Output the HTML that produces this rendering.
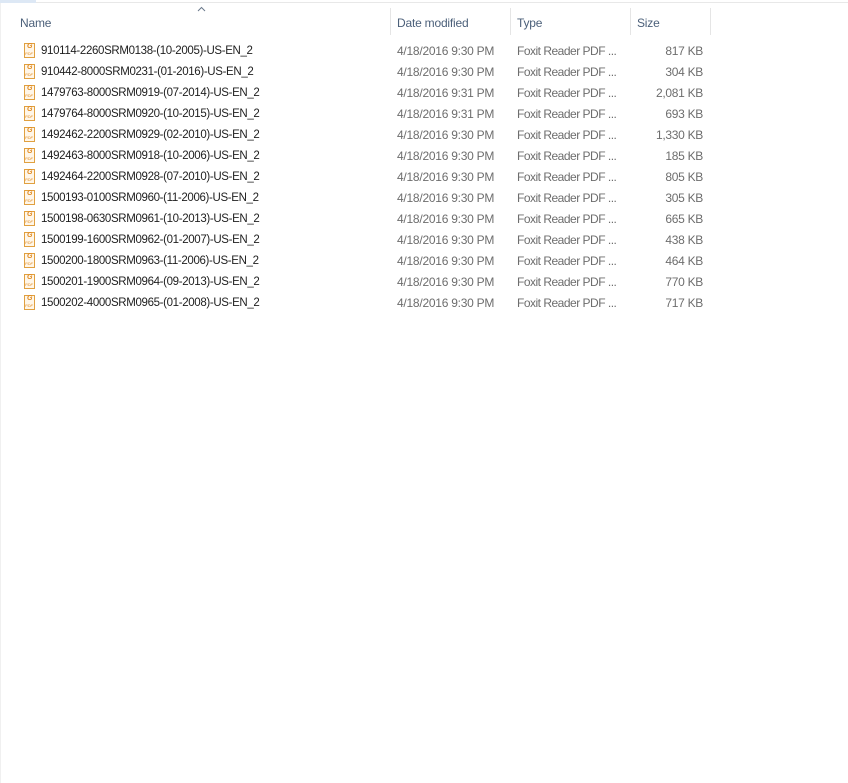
<!DOCTYPE html>
<html><head><meta charset="utf-8"><style>
*{margin:0;padding:0;box-sizing:border-box}
body{width:848px;height:783px;background:#fff;font-family:"Liberation Sans",sans-serif;font-size:12px;color:#1e1e1e;position:relative;overflow:hidden}
.top{position:absolute;left:0;top:0;width:848px;height:3px;border-bottom:1px solid #e8e8e8}
.tab{position:absolute;left:0;top:0;width:36px;height:3px;background:#dde8f5}
.lb{position:absolute;left:0;top:3px;width:1px;height:780px;background:#f0f0f0}
.hdr{position:absolute;color:#4c607a;font-size:12px;letter-spacing:-0.2px}
.sep{position:absolute;top:8px;width:1px;height:27px;background:#e5e5e5}
.caret{position:absolute;left:197px;top:5px;width:9px;height:9px}
.row{position:absolute;left:0;height:21px;width:848px}
.row span{position:absolute;top:4px;white-space:nowrap}
.row span.n{left:41px;top:5px;font-size:11.5px;letter-spacing:-0.35px}
.d{left:397px;color:#6d6d6d;letter-spacing:-0.25px}
.t{left:517px;color:#6d6d6d;letter-spacing:-0.5px}
.s{right:145px;color:#6d6d6d;letter-spacing:-0.3px}
.ic{position:absolute;left:24px;top:3px;width:11px;height:15px;border:1px solid #e0a040;background:#fff6e8}
.ic:before{content:"G";position:absolute;left:2px;top:-1px;font-size:7px;font-weight:bold;color:#e08a20}
.ic:after{content:"PDF";position:absolute;left:0;top:7px;font-size:4px;color:#e08a20}
</style></head><body>
<div class="top"></div><div class="tab"></div><div class="lb"></div>
<svg class="caret" viewBox="0 0 9 9"><path d="M1 6 L4.5 2.5 L8 6" fill="none" stroke="#6b7a8c" stroke-width="1"/></svg>
<div class="hdr" style="left:20px;top:16px">Name</div>
<div class="hdr" style="left:397px;top:16px">Date modified</div>
<div class="hdr" style="left:517px;top:16px">Type</div>
<div class="hdr" style="left:637px;top:16px">Size</div>
<div class="sep" style="left:390px"></div>
<div class="sep" style="left:510px"></div>
<div class="sep" style="left:630px"></div>
<div class="sep" style="left:710px"></div>
<div class="row" style="top:40px"><i class="ic"></i><span class="n">910114-2260SRM0138-(10-2005)-US-EN_2</span><span class="d">4/18/2016 9:30 PM</span><span class="t">Foxit Reader PDF ...</span><span class="s">817 KB</span></div>
<div class="row" style="top:61px"><i class="ic"></i><span class="n">910442-8000SRM0231-(01-2016)-US-EN_2</span><span class="d">4/18/2016 9:30 PM</span><span class="t">Foxit Reader PDF ...</span><span class="s">304 KB</span></div>
<div class="row" style="top:82px"><i class="ic"></i><span class="n">1479763-8000SRM0919-(07-2014)-US-EN_2</span><span class="d">4/18/2016 9:31 PM</span><span class="t">Foxit Reader PDF ...</span><span class="s">2,081 KB</span></div>
<div class="row" style="top:103px"><i class="ic"></i><span class="n">1479764-8000SRM0920-(10-2015)-US-EN_2</span><span class="d">4/18/2016 9:31 PM</span><span class="t">Foxit Reader PDF ...</span><span class="s">693 KB</span></div>
<div class="row" style="top:124px"><i class="ic"></i><span class="n">1492462-2200SRM0929-(02-2010)-US-EN_2</span><span class="d">4/18/2016 9:30 PM</span><span class="t">Foxit Reader PDF ...</span><span class="s">1,330 KB</span></div>
<div class="row" style="top:145px"><i class="ic"></i><span class="n">1492463-8000SRM0918-(10-2006)-US-EN_2</span><span class="d">4/18/2016 9:30 PM</span><span class="t">Foxit Reader PDF ...</span><span class="s">185 KB</span></div>
<div class="row" style="top:166px"><i class="ic"></i><span class="n">1492464-2200SRM0928-(07-2010)-US-EN_2</span><span class="d">4/18/2016 9:30 PM</span><span class="t">Foxit Reader PDF ...</span><span class="s">805 KB</span></div>
<div class="row" style="top:187px"><i class="ic"></i><span class="n">1500193-0100SRM0960-(11-2006)-US-EN_2</span><span class="d">4/18/2016 9:30 PM</span><span class="t">Foxit Reader PDF ...</span><span class="s">305 KB</span></div>
<div class="row" style="top:208px"><i class="ic"></i><span class="n">1500198-0630SRM0961-(10-2013)-US-EN_2</span><span class="d">4/18/2016 9:30 PM</span><span class="t">Foxit Reader PDF ...</span><span class="s">665 KB</span></div>
<div class="row" style="top:229px"><i class="ic"></i><span class="n">1500199-1600SRM0962-(01-2007)-US-EN_2</span><span class="d">4/18/2016 9:30 PM</span><span class="t">Foxit Reader PDF ...</span><span class="s">438 KB</span></div>
<div class="row" style="top:250px"><i class="ic"></i><span class="n">1500200-1800SRM0963-(11-2006)-US-EN_2</span><span class="d">4/18/2016 9:30 PM</span><span class="t">Foxit Reader PDF ...</span><span class="s">464 KB</span></div>
<div class="row" style="top:271px"><i class="ic"></i><span class="n">1500201-1900SRM0964-(09-2013)-US-EN_2</span><span class="d">4/18/2016 9:30 PM</span><span class="t">Foxit Reader PDF ...</span><span class="s">770 KB</span></div>
<div class="row" style="top:292px"><i class="ic"></i><span class="n">1500202-4000SRM0965-(01-2008)-US-EN_2</span><span class="d">4/18/2016 9:30 PM</span><span class="t">Foxit Reader PDF ...</span><span class="s">717 KB</span></div>
</body></html>
